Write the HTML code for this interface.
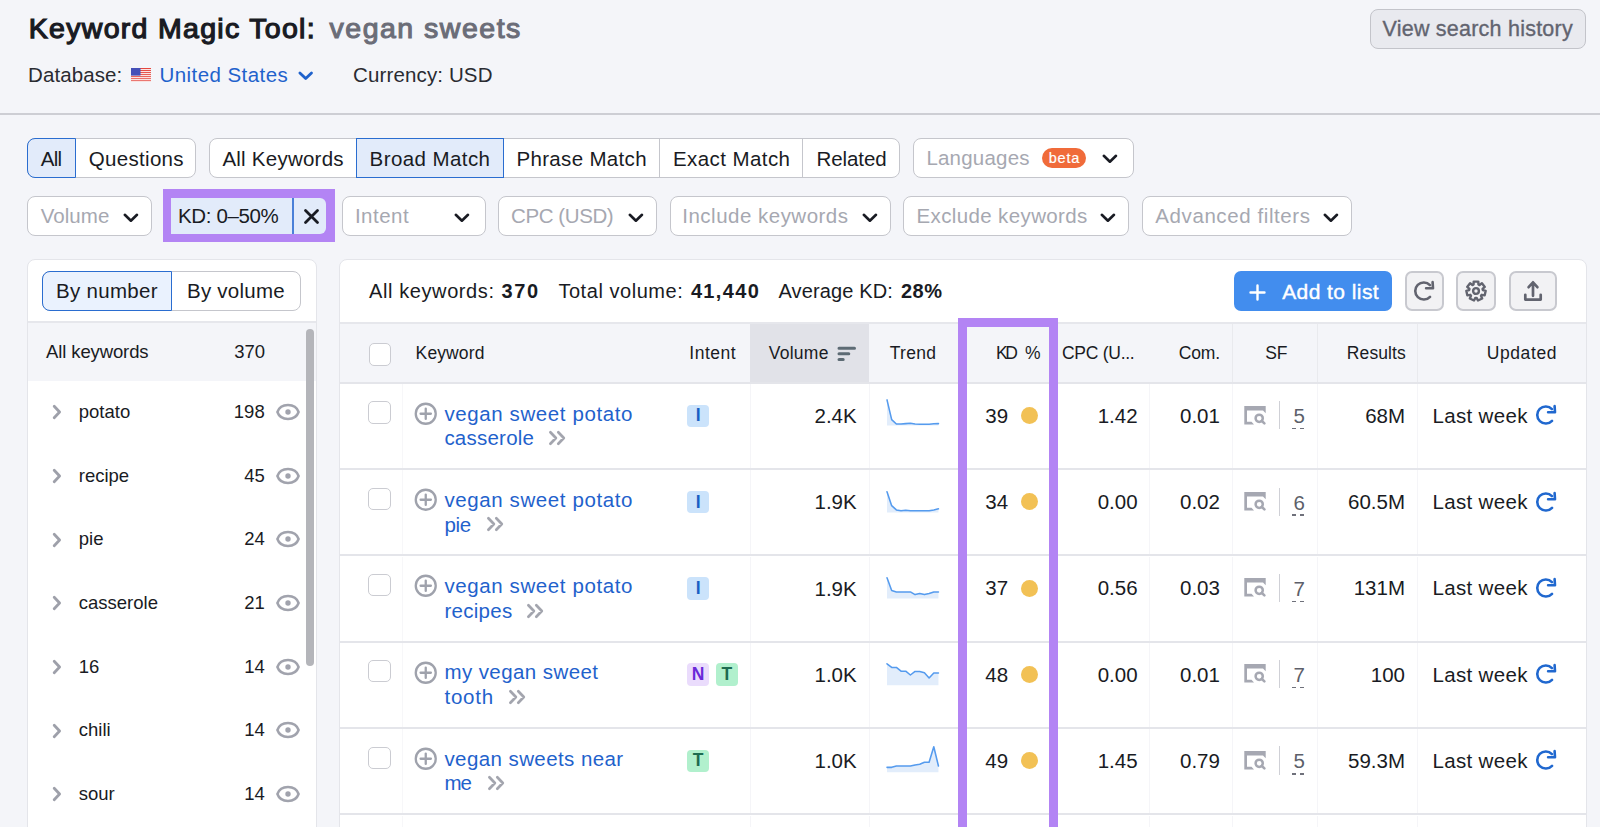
<!DOCTYPE html>
<html><head><meta charset="utf-8"><style>
html,body{margin:0;padding:0}
body{width:1600px;height:827px;overflow:hidden;background:#f4f5f9;position:relative;font-family:"Liberation Sans",sans-serif}
.t{position:absolute;white-space:nowrap;font-family:"Liberation Sans",sans-serif}
.b{position:absolute;display:block}
</style></head><body>
<div class="t" style="left:28.80px;top:10.42px;font-size:28.5px;line-height:37px;letter-spacing:1.298px;color:#191b23;-webkit-text-stroke:1.25px #191b23;">Keyword Magic Tool:</div>
<div class="t" style="left:329.60px;top:10.42px;font-size:28.5px;line-height:37px;letter-spacing:1.493px;color:#6b6d78;-webkit-text-stroke:1.1px #6b6d78;">vegan sweets</div>
<div class="b" style="left:1369.75px;top:9.30px;width:216.25px;height:40.20px;background:#e9eaef;border:1.5px solid #c3c4ca;border-radius:8px;box-sizing:border-box"></div>
<div class="t" style="left:1382.50px;top:14.55px;font-size:21.5px;line-height:28px;letter-spacing:0.232px;color:#62646f;-webkit-text-stroke:0.35px #62646f;">View search history</div>
<div class="t" style="left:28.00px;top:61.40px;font-size:20.5px;line-height:27px;letter-spacing:0.093px;color:#2a2b31;">Database:</div>
<svg class="b" style="left:131.00px;top:67.80px" width="20" height="14.2" viewBox="0 0 20 14.2"><rect x="0" y="0.00" width="20" height="1.01" fill="#e5473f"/><rect x="0" y="2.03" width="20" height="1.01" fill="#e5473f"/><rect x="0" y="4.06" width="20" height="1.01" fill="#e5473f"/><rect x="0" y="6.09" width="20" height="1.01" fill="#e5473f"/><rect x="0" y="8.11" width="20" height="1.01" fill="#e5473f"/><rect x="0" y="10.14" width="20" height="1.01" fill="#e5473f"/><rect x="0" y="12.17" width="20" height="1.01" fill="#e5473f"/><rect x="0" y="1.01" width="20" height="1.01" fill="#fbe4e2"/><rect x="0" y="3.04" width="20" height="1.01" fill="#fbe4e2"/><rect x="0" y="5.07" width="20" height="1.01" fill="#fbe4e2"/><rect x="0" y="7.10" width="20" height="1.01" fill="#fbe4e2"/><rect x="0" y="9.13" width="20" height="1.01" fill="#fbe4e2"/><rect x="0" y="11.16" width="20" height="1.01" fill="#fbe4e2"/><rect x="0" y="13.19" width="20" height="1.01" fill="#fbe4e2"/><rect x="0" y="0" width="9.5" height="7.6" fill="#4550b8"/></svg>
<div class="t" style="left:159.50px;top:61.40px;font-size:20.5px;line-height:27px;letter-spacing:0.437px;color:#1f62cc;">United States</div>
<svg class="b" style="left:297.30px;top:69.50px" width="17.4" height="11.5" viewBox="0 0 17.4 11.5"><path d="M2.90 2.90 L8.70 8.60 L14.50 2.90" fill="none" stroke="#1f62cc" stroke-width="2.8" stroke-linecap="round" stroke-linejoin="round"/></svg>
<div class="t" style="left:353.00px;top:61.40px;font-size:20.5px;line-height:27px;letter-spacing:0.138px;color:#2a2b31;">Currency: USD</div>
<div class="b" style="left:0.00px;top:113.00px;width:1600.00px;height:2.00px;background:#cdced4"></div>
<div class="b" style="left:27.00px;top:138.40px;width:169.30px;height:39.20px;background:#fff;border:1.5px solid #c5c6cc;border-radius:8px;box-sizing:border-box"></div>
<div class="b" style="left:27.00px;top:138.40px;width:48.60px;height:39.20px;background:#e2ebfa;border:1.5px solid #2a6dd0;border-radius:8px 0 0 8px;box-sizing:border-box"></div>
<div class="t" style="left:40.75px;top:145.00px;font-size:20.5px;line-height:27px;letter-spacing:-0.713px;color:#191b23;">All</div>
<div class="t" style="left:88.65px;top:145.00px;font-size:20.5px;line-height:27px;letter-spacing:0.332px;color:#191b23;">Questions</div>
<div class="b" style="left:209.00px;top:138.40px;width:690.50px;height:39.20px;background:#fff;border:1.5px solid #c5c6cc;border-radius:8px;box-sizing:border-box"></div>
<div class="t" style="left:222.40px;top:145.00px;font-size:20.5px;line-height:27px;letter-spacing:0.246px;color:#191b23;">All Keywords</div>
<div class="b" style="left:356.00px;top:138.40px;width:148.00px;height:39.20px;background:#e2ebfa;border:1.5px solid #2a6dd0;border-radius:0;box-sizing:border-box"></div>
<div class="t" style="left:369.60px;top:145.00px;font-size:20.5px;line-height:27px;letter-spacing:0.419px;color:#191b23;">Broad Match</div>
<div class="t" style="left:516.40px;top:145.00px;font-size:20.5px;line-height:27px;letter-spacing:0.340px;color:#191b23;">Phrase Match</div>
<div class="b" style="left:658.85px;top:138.40px;width:1.50px;height:39.20px;background:#c5c6cc"></div>
<div class="t" style="left:673.00px;top:145.00px;font-size:20.5px;line-height:27px;letter-spacing:0.421px;color:#191b23;">Exact Match</div>
<div class="b" style="left:801.85px;top:138.40px;width:1.50px;height:39.20px;background:#c5c6cc"></div>
<div class="t" style="left:816.40px;top:145.00px;font-size:20.5px;line-height:27px;letter-spacing:-0.061px;color:#191b23;">Related</div>
<div class="b" style="left:912.60px;top:138.40px;width:221.00px;height:39.20px;background:#fff;border:1.5px solid #c5c6cc;border-radius:8px;box-sizing:border-box"></div>
<div class="t" style="left:926.40px;top:143.80px;font-size:20.5px;line-height:27px;letter-spacing:0.206px;color:#a6a8b1;">Languages</div>
<div class="b" style="left:1041.60px;top:148.00px;width:44.80px;height:19.80px;background:#f06b3a;border-radius:10px"></div>
<div class="t" style="left:1048.80px;top:148.68px;font-size:14.5px;line-height:19px;letter-spacing:0.756px;color:#fff;-webkit-text-stroke:0.2px #fff;">beta</div>
<svg class="b" style="left:1100.50px;top:152.50px" width="17.8" height="11.5" viewBox="0 0 17.8 11.5"><path d="M2.80 2.80 L8.90 8.70 L15.00 2.80" fill="none" stroke="#191b23" stroke-width="2.6" stroke-linecap="round" stroke-linejoin="round"/></svg>
<div class="b" style="left:27.00px;top:196.00px;width:124.80px;height:39.60px;background:#fff;border:1.5px solid #c5c6cc;border-radius:8px;box-sizing:border-box"></div>
<div class="t" style="left:40.75px;top:202.20px;font-size:20.5px;line-height:27px;letter-spacing:0.036px;color:#a6a8b1;">Volume</div>
<svg class="b" style="left:122.00px;top:212.00px" width="17.8" height="11.5" viewBox="0 0 17.8 11.5"><path d="M2.80 2.80 L8.90 8.70 L15.00 2.80" fill="none" stroke="#191b23" stroke-width="2.6" stroke-linecap="round" stroke-linejoin="round"/></svg>
<div class="b" style="left:342.00px;top:196.00px;width:143.80px;height:39.60px;background:#fff;border:1.5px solid #c5c6cc;border-radius:8px;box-sizing:border-box"></div>
<div class="t" style="left:354.90px;top:202.20px;font-size:20.5px;line-height:27px;letter-spacing:0.482px;color:#a6a8b1;">Intent</div>
<svg class="b" style="left:452.80px;top:212.00px" width="17.8" height="11.5" viewBox="0 0 17.8 11.5"><path d="M2.80 2.80 L8.90 8.70 L15.00 2.80" fill="none" stroke="#191b23" stroke-width="2.6" stroke-linecap="round" stroke-linejoin="round"/></svg>
<div class="b" style="left:498.30px;top:196.00px;width:158.50px;height:39.60px;background:#fff;border:1.5px solid #c5c6cc;border-radius:8px;box-sizing:border-box"></div>
<div class="t" style="left:511.00px;top:202.20px;font-size:20.5px;line-height:27px;letter-spacing:-0.403px;color:#a6a8b1;">CPC (USD)</div>
<svg class="b" style="left:627.10px;top:212.00px" width="17.8" height="11.5" viewBox="0 0 17.8 11.5"><path d="M2.80 2.80 L8.90 8.70 L15.00 2.80" fill="none" stroke="#191b23" stroke-width="2.6" stroke-linecap="round" stroke-linejoin="round"/></svg>
<div class="b" style="left:669.60px;top:196.00px;width:221.00px;height:39.60px;background:#fff;border:1.5px solid #c5c6cc;border-radius:8px;box-sizing:border-box"></div>
<div class="t" style="left:682.30px;top:202.20px;font-size:20.5px;line-height:27px;letter-spacing:0.488px;color:#a6a8b1;">Include keywords</div>
<svg class="b" style="left:860.80px;top:212.00px" width="17.8" height="11.5" viewBox="0 0 17.8 11.5"><path d="M2.80 2.80 L8.90 8.70 L15.00 2.80" fill="none" stroke="#191b23" stroke-width="2.6" stroke-linecap="round" stroke-linejoin="round"/></svg>
<div class="b" style="left:903.30px;top:196.00px;width:226.10px;height:39.60px;background:#fff;border:1.5px solid #c5c6cc;border-radius:8px;box-sizing:border-box"></div>
<div class="t" style="left:916.50px;top:202.20px;font-size:20.5px;line-height:27px;letter-spacing:0.373px;color:#a6a8b1;">Exclude keywords</div>
<svg class="b" style="left:1099.30px;top:212.00px" width="17.8" height="11.5" viewBox="0 0 17.8 11.5"><path d="M2.80 2.80 L8.90 8.70 L15.00 2.80" fill="none" stroke="#191b23" stroke-width="2.6" stroke-linecap="round" stroke-linejoin="round"/></svg>
<div class="b" style="left:1142.20px;top:196.00px;width:210.00px;height:39.60px;background:#fff;border:1.5px solid #c5c6cc;border-radius:8px;box-sizing:border-box"></div>
<div class="t" style="left:1155.30px;top:202.20px;font-size:20.5px;line-height:27px;letter-spacing:0.590px;color:#a6a8b1;">Advanced filters</div>
<svg class="b" style="left:1322.10px;top:212.00px" width="17.8" height="11.5" viewBox="0 0 17.8 11.5"><path d="M2.80 2.80 L8.90 8.70 L15.00 2.80" fill="none" stroke="#191b23" stroke-width="2.6" stroke-linecap="round" stroke-linejoin="round"/></svg>
<div class="b" style="left:162.50px;top:189.00px;width:172.50px;height:53.00px;background:#b384f4"></div>
<div class="b" style="left:171.25px;top:197.50px;width:155.00px;height:36.00px;background:#e2ebfa;border-radius:0 6px 6px 0"></div>
<div class="b" style="left:292.20px;top:197.50px;width:1.60px;height:36.00px;background:#4a80d8"></div>
<div class="t" style="left:178.00px;top:201.90px;font-size:20.5px;line-height:27px;letter-spacing:-0.370px;color:#191b23;">KD: 0–50%</div>
<svg class="b" style="left:302.50px;top:207.80px" width="17" height="17" viewBox="0 0 17 17"><path d="M2.5 2.5 L14.5 14.5 M14.5 2.5 L2.5 14.5" stroke="#191b23" stroke-width="2.8" stroke-linecap="round"/></svg>
<div class="b" style="left:26.50px;top:259.00px;width:290.00px;height:641.00px;background:#fff;border:1px solid #e4e5ea;border-radius:8px;box-sizing:border-box"></div>
<div class="b" style="left:42.40px;top:271.00px;width:258.20px;height:39.60px;background:#fff;border:1.5px solid #c5c6cc;border-radius:8px;box-sizing:border-box"></div>
<div class="b" style="left:42.40px;top:271.00px;width:129.20px;height:39.60px;background:#eaf2fe;border:1.5px solid #2a6dd0;border-radius:8px 0 0 8px;box-sizing:border-box"></div>
<div class="t" style="left:56.00px;top:277.40px;font-size:20.5px;line-height:27px;letter-spacing:0.310px;color:#191b23;">By number</div>
<div class="t" style="left:187.00px;top:277.40px;font-size:20.5px;line-height:27px;letter-spacing:0.238px;color:#191b23;">By volume</div>
<div class="b" style="left:27.50px;top:321.00px;width:288.00px;height:2.00px;background:#e6e7ec"></div>
<div class="b" style="left:27.50px;top:323.00px;width:288.00px;height:58.00px;background:#f4f5f9"></div>
<div class="t" style="left:46.00px;top:339.59px;font-size:18.5px;line-height:24px;letter-spacing:-0.113px;color:#191b23;">All keywords</div>
<div class="t" style="left:234.14px;top:339.59px;font-size:18.5px;line-height:24px;letter-spacing:0.000px;color:#191b23;">370</div>
<div class="b" style="left:306.00px;top:329.00px;width:8.00px;height:337.00px;background:#b4b5ba;border-radius:4px"></div>
<svg class="b" style="left:51.00px;top:403.40px" width="12" height="18" viewBox="0 0 12 18"><path d="M3.2 3.2 L8.6 9 L3.2 14.8" fill="none" stroke="#9ea0aa" stroke-width="2.8" stroke-linecap="round" stroke-linejoin="round"/></svg>
<div class="t" style="left:78.75px;top:399.99px;font-size:18.5px;line-height:24px;letter-spacing:0.000px;color:#191b23;">potato</div>
<div class="t" style="left:233.84px;top:399.99px;font-size:18.5px;line-height:24px;letter-spacing:0.000px;color:#191b23;">198</div>
<svg class="b" style="left:274.50px;top:400.90px" width="26" height="22" viewBox="0 0 26 22"><path d="M2.4 11 C5.6 1.7 20.4 1.7 23.6 11 C20.4 20.3 5.6 20.3 2.4 11 Z" fill="none" stroke="#a1a3ad" stroke-width="2.5" stroke-linejoin="round"/><circle cx="13" cy="11" r="2.7" fill="#a1a3ad"/></svg>
<svg class="b" style="left:51.00px;top:467.07px" width="12" height="18" viewBox="0 0 12 18"><path d="M3.2 3.2 L8.6 9 L3.2 14.8" fill="none" stroke="#9ea0aa" stroke-width="2.8" stroke-linecap="round" stroke-linejoin="round"/></svg>
<div class="t" style="left:78.75px;top:463.66px;font-size:18.5px;line-height:24px;letter-spacing:0.000px;color:#191b23;">recipe</div>
<div class="t" style="left:244.13px;top:463.66px;font-size:18.5px;line-height:24px;letter-spacing:0.000px;color:#191b23;">45</div>
<svg class="b" style="left:274.50px;top:464.57px" width="26" height="22" viewBox="0 0 26 22"><path d="M2.4 11 C5.6 1.7 20.4 1.7 23.6 11 C20.4 20.3 5.6 20.3 2.4 11 Z" fill="none" stroke="#a1a3ad" stroke-width="2.5" stroke-linejoin="round"/><circle cx="13" cy="11" r="2.7" fill="#a1a3ad"/></svg>
<svg class="b" style="left:51.00px;top:530.74px" width="12" height="18" viewBox="0 0 12 18"><path d="M3.2 3.2 L8.6 9 L3.2 14.8" fill="none" stroke="#9ea0aa" stroke-width="2.8" stroke-linecap="round" stroke-linejoin="round"/></svg>
<div class="t" style="left:78.75px;top:527.33px;font-size:18.5px;line-height:24px;letter-spacing:0.000px;color:#191b23;">pie</div>
<div class="t" style="left:244.13px;top:527.33px;font-size:18.5px;line-height:24px;letter-spacing:0.000px;color:#191b23;">24</div>
<svg class="b" style="left:274.50px;top:528.24px" width="26" height="22" viewBox="0 0 26 22"><path d="M2.4 11 C5.6 1.7 20.4 1.7 23.6 11 C20.4 20.3 5.6 20.3 2.4 11 Z" fill="none" stroke="#a1a3ad" stroke-width="2.5" stroke-linejoin="round"/><circle cx="13" cy="11" r="2.7" fill="#a1a3ad"/></svg>
<svg class="b" style="left:51.00px;top:594.41px" width="12" height="18" viewBox="0 0 12 18"><path d="M3.2 3.2 L8.6 9 L3.2 14.8" fill="none" stroke="#9ea0aa" stroke-width="2.8" stroke-linecap="round" stroke-linejoin="round"/></svg>
<div class="t" style="left:78.75px;top:591.00px;font-size:18.5px;line-height:24px;letter-spacing:0.000px;color:#191b23;">casserole</div>
<div class="t" style="left:244.13px;top:591.00px;font-size:18.5px;line-height:24px;letter-spacing:0.000px;color:#191b23;">21</div>
<svg class="b" style="left:274.50px;top:591.91px" width="26" height="22" viewBox="0 0 26 22"><path d="M2.4 11 C5.6 1.7 20.4 1.7 23.6 11 C20.4 20.3 5.6 20.3 2.4 11 Z" fill="none" stroke="#a1a3ad" stroke-width="2.5" stroke-linejoin="round"/><circle cx="13" cy="11" r="2.7" fill="#a1a3ad"/></svg>
<svg class="b" style="left:51.00px;top:658.08px" width="12" height="18" viewBox="0 0 12 18"><path d="M3.2 3.2 L8.6 9 L3.2 14.8" fill="none" stroke="#9ea0aa" stroke-width="2.8" stroke-linecap="round" stroke-linejoin="round"/></svg>
<div class="t" style="left:78.75px;top:654.67px;font-size:18.5px;line-height:24px;letter-spacing:0.000px;color:#191b23;">16</div>
<div class="t" style="left:244.13px;top:654.67px;font-size:18.5px;line-height:24px;letter-spacing:0.000px;color:#191b23;">14</div>
<svg class="b" style="left:274.50px;top:655.58px" width="26" height="22" viewBox="0 0 26 22"><path d="M2.4 11 C5.6 1.7 20.4 1.7 23.6 11 C20.4 20.3 5.6 20.3 2.4 11 Z" fill="none" stroke="#a1a3ad" stroke-width="2.5" stroke-linejoin="round"/><circle cx="13" cy="11" r="2.7" fill="#a1a3ad"/></svg>
<svg class="b" style="left:51.00px;top:721.75px" width="12" height="18" viewBox="0 0 12 18"><path d="M3.2 3.2 L8.6 9 L3.2 14.8" fill="none" stroke="#9ea0aa" stroke-width="2.8" stroke-linecap="round" stroke-linejoin="round"/></svg>
<div class="t" style="left:78.75px;top:718.34px;font-size:18.5px;line-height:24px;letter-spacing:0.000px;color:#191b23;">chili</div>
<div class="t" style="left:244.13px;top:718.34px;font-size:18.5px;line-height:24px;letter-spacing:0.000px;color:#191b23;">14</div>
<svg class="b" style="left:274.50px;top:719.25px" width="26" height="22" viewBox="0 0 26 22"><path d="M2.4 11 C5.6 1.7 20.4 1.7 23.6 11 C20.4 20.3 5.6 20.3 2.4 11 Z" fill="none" stroke="#a1a3ad" stroke-width="2.5" stroke-linejoin="round"/><circle cx="13" cy="11" r="2.7" fill="#a1a3ad"/></svg>
<svg class="b" style="left:51.00px;top:785.42px" width="12" height="18" viewBox="0 0 12 18"><path d="M3.2 3.2 L8.6 9 L3.2 14.8" fill="none" stroke="#9ea0aa" stroke-width="2.8" stroke-linecap="round" stroke-linejoin="round"/></svg>
<div class="t" style="left:78.75px;top:782.01px;font-size:18.5px;line-height:24px;letter-spacing:0.000px;color:#191b23;">sour</div>
<div class="t" style="left:244.13px;top:782.01px;font-size:18.5px;line-height:24px;letter-spacing:0.000px;color:#191b23;">14</div>
<svg class="b" style="left:274.50px;top:782.92px" width="26" height="22" viewBox="0 0 26 22"><path d="M2.4 11 C5.6 1.7 20.4 1.7 23.6 11 C20.4 20.3 5.6 20.3 2.4 11 Z" fill="none" stroke="#a1a3ad" stroke-width="2.5" stroke-linejoin="round"/><circle cx="13" cy="11" r="2.7" fill="#a1a3ad"/></svg>
<div class="b" style="left:339.00px;top:259.00px;width:1247.50px;height:641.00px;background:#fff;border:1px solid #e4e5ea;border-radius:8px;box-sizing:border-box"></div>
<div class="t" style="left:369.00px;top:278.17px;font-size:20px;line-height:26px;letter-spacing:0.598px;color:#191b23;">All keywords:</div>
<div class="t" style="left:501.60px;top:278.17px;font-size:20px;line-height:26px;letter-spacing:1.520px;color:#191b23;font-weight:700;">370</div>
<div class="t" style="left:558.40px;top:278.17px;font-size:20px;line-height:26px;letter-spacing:0.547px;color:#191b23;">Total volume:</div>
<div class="t" style="left:690.90px;top:278.17px;font-size:20px;line-height:26px;letter-spacing:1.344px;color:#191b23;font-weight:700;">41,440</div>
<div class="t" style="left:778.40px;top:278.17px;font-size:20px;line-height:26px;letter-spacing:0.138px;color:#191b23;">Average KD:</div>
<div class="t" style="left:900.90px;top:278.17px;font-size:20px;line-height:26px;letter-spacing:0.540px;color:#191b23;font-weight:700;">28%</div>
<div class="b" style="left:1233.50px;top:271.20px;width:158.70px;height:39.80px;background:#428dee;border-radius:7px"></div>
<svg class="b" style="left:1249.00px;top:283.50px" width="17" height="17" viewBox="0 0 17 17"><path d="M8.5 1.5 V15.5 M1.5 8.5 H15.5" stroke="#fff" stroke-width="2.4" stroke-linecap="round"/></svg>
<div class="t" style="left:1282.20px;top:277.72px;font-size:21px;line-height:27px;letter-spacing:0.429px;color:#fff;-webkit-text-stroke:0.4px #fff;">Add to list</div>
<div class="b" style="left:1404.60px;top:271.20px;width:39.40px;height:39.80px;background:#f2f2f4;border:2px solid #c8c9cf;border-radius:7px;box-sizing:border-box"></div>
<div class="b" style="left:1456.30px;top:271.20px;width:39.90px;height:39.80px;background:#f2f2f4;border:2px solid #c8c9cf;border-radius:7px;box-sizing:border-box"></div>
<div class="b" style="left:1508.60px;top:271.20px;width:48.20px;height:39.80px;background:#f2f2f4;border:2px solid #c8c9cf;border-radius:7px;box-sizing:border-box"></div>
<svg class="b" style="left:1411.60px;top:278.90px" width="24" height="24" viewBox="0 0 24 24"><path d="M18.05 17.83 A8.55 8.55 0 1 1 17.95 6.06" fill="none" stroke="#62646f" stroke-width="2.6" stroke-linecap="round"/><path d="M14.1 9.3 L21 9.3 L20.6 3.1" fill="none" stroke="#62646f" stroke-width="2.6" stroke-linecap="round" stroke-linejoin="round"/></svg>
<svg class="b" style="left:1464.40px;top:279.00px" width="24" height="24" viewBox="0 0 24 24"><path d="M9.69 2.58 L14.31 2.58 L14.43 5.54 L15.53 6.07 L17.93 4.32 L20.80 7.93 L18.56 9.87 L18.84 11.07 L21.70 11.85 L20.67 16.34 L17.75 15.81 L16.99 16.76 L18.17 19.49 L14.01 21.49 L12.61 18.87 L11.39 18.87 L9.99 21.49 L5.83 19.49 L7.01 16.76 L6.25 15.81 L3.33 16.34 L2.30 11.85 L5.16 11.07 L5.44 9.87 L3.20 7.93 L6.07 4.32 L8.47 6.07 L9.57 5.54 Z" fill="none" stroke="#62646f" stroke-width="2.4" stroke-linejoin="round"/><circle cx="12" cy="12" r="2.9" fill="none" stroke="#62646f" stroke-width="2.4"/></svg>
<svg class="b" style="left:1520.60px;top:279.00px" width="24" height="24" viewBox="0 0 24 24"><path d="M12 16.8 V3.6 M7.6 8.2 L12 3.3 L16.4 8.2" fill="none" stroke="#62646f" stroke-width="2.7" stroke-linecap="round" stroke-linejoin="round"/><path d="M4.3 15.8 V20.6 H19.7 V15.8" fill="none" stroke="#62646f" stroke-width="2.7" stroke-linecap="round" stroke-linejoin="round"/></svg>
<div class="b" style="left:340.00px;top:321.50px;width:1245.50px;height:2.00px;background:#e6e7ec"></div>
<div class="b" style="left:340.00px;top:323.50px;width:1245.50px;height:58.50px;background:#f4f5f9"></div>
<div class="b" style="left:750.30px;top:323.50px;width:119.00px;height:58.50px;background:#e1e2e8"></div>
<div class="b" style="left:1232.30px;top:323.50px;width:1.00px;height:58.50px;background:#e9eaee"></div>
<div class="b" style="left:1316.90px;top:323.50px;width:1.00px;height:58.50px;background:#e9eaee"></div>
<div class="b" style="left:1416.80px;top:323.50px;width:1.00px;height:58.50px;background:#e9eaee"></div>
<div class="b" style="left:340.00px;top:382.00px;width:1245.50px;height:2.00px;background:#e4e5ea"></div>
<div class="b" style="left:368.60px;top:343.40px;width:22.40px;height:22.20px;background:#fff;border:1.8px solid #cbccd2;border-radius:5px;box-sizing:border-box"></div>
<div class="t" style="left:415.60px;top:342.14px;font-size:17.5px;line-height:23px;letter-spacing:0.118px;color:#191b23;">Keyword</div>
<div class="t" style="left:689.30px;top:342.14px;font-size:17.5px;line-height:23px;letter-spacing:0.503px;color:#191b23;">Intent</div>
<div class="t" style="left:768.80px;top:342.14px;font-size:17.5px;line-height:23px;letter-spacing:0.248px;color:#191b23;">Volume</div>
<svg class="b" style="left:836.00px;top:344.50px" width="21" height="18" viewBox="0 0 21 18"><path d="M3 3.2 H18.5 M3 8.8 H12.8 M3 14.4 H7.2" stroke="#5d6b74" stroke-width="3" stroke-linecap="round"/></svg>
<div class="t" style="left:889.80px;top:342.14px;font-size:17.5px;line-height:23px;letter-spacing:0.259px;color:#191b23;">Trend</div>
<div class="t" style="left:996.00px;top:342.14px;font-size:17.5px;line-height:23px;letter-spacing:-2.408px;color:#191b23;">KD</div>
<div class="t" style="left:1025.00px;top:342.14px;font-size:17.5px;line-height:23px;letter-spacing:0.000px;color:#191b23;">%</div>
<div class="t" style="left:1062.00px;top:342.14px;font-size:17.5px;line-height:23px;letter-spacing:-0.271px;color:#191b23;">CPC (U...</div>
<div class="t" style="left:1178.80px;top:342.14px;font-size:17.5px;line-height:23px;letter-spacing:-0.202px;color:#191b23;">Com.</div>
<div class="t" style="left:1265.20px;top:342.14px;font-size:17.5px;line-height:23px;letter-spacing:0.000px;color:#191b23;">SF</div>
<div class="t" style="left:1346.80px;top:342.14px;font-size:17.5px;line-height:23px;letter-spacing:0.109px;color:#191b23;">Results</div>
<div class="t" style="left:1486.70px;top:342.14px;font-size:17.5px;line-height:23px;letter-spacing:0.605px;color:#191b23;">Updated</div>
<div class="b" style="left:401.80px;top:384.00px;width:1.00px;height:85.00px;background:#f7f7f9"></div>
<div class="b" style="left:750.20px;top:384.00px;width:1.00px;height:85.00px;background:#f5f5f8"></div>
<div class="b" style="left:868.90px;top:384.00px;width:1.00px;height:85.00px;background:#f5f5f8"></div>
<div class="b" style="left:1149.40px;top:384.00px;width:1.00px;height:85.00px;background:#f5f5f8"></div>
<div class="b" style="left:1231.90px;top:384.00px;width:1.00px;height:85.00px;background:#f5f5f8"></div>
<div class="b" style="left:1317.30px;top:384.00px;width:1.00px;height:85.00px;background:#f5f5f8"></div>
<div class="b" style="left:1416.90px;top:384.00px;width:1.00px;height:85.00px;background:#f5f5f8"></div>
<div class="b" style="left:340.00px;top:468.00px;width:1245.50px;height:2.00px;background:#e4e5ea"></div>
<div class="b" style="left:368.40px;top:401.40px;width:22.60px;height:22.20px;background:#fff;border:1.8px solid #cbccd2;border-radius:5px;box-sizing:border-box"></div>
<svg class="b" style="left:413.80px;top:401.80px" width="23.5" height="23.5" viewBox="0 0 23.5 23.5"><circle cx="11.75" cy="11.75" r="10" fill="none" stroke="#9fa2ac" stroke-width="2.3"/><path d="M11.75 6.6 V16.9 M6.6 11.75 H16.9" stroke="#9fa2ac" stroke-width="2.3" stroke-linecap="round"/></svg>
<div class="t" style="left:444.40px;top:399.50px;font-size:20.5px;line-height:27px;letter-spacing:0.600px;color:#1f62cc;">vegan sweet potato</div>
<div class="t" style="left:444.40px;top:424.20px;font-size:20.5px;line-height:27px;letter-spacing:0.233px;color:#1f62cc;">casserole</div>
<svg class="b" style="left:548.00px;top:430.00px" width="19" height="16" viewBox="0 0 19 16"><path d="M2.4 2.3 L7.9 8 L2.4 13.7 M10.3 2.3 L15.8 8 L10.3 13.7" fill="none" stroke="#a3a5ae" stroke-width="2.7" stroke-linecap="round" stroke-linejoin="round"/></svg>
<div class="b" style="left:686.90px;top:404.50px;width:22.40px;height:22.70px;background:#cbe3fb;border-radius:4px"></div>
<div class="t" style="left:695.67px;top:404.24px;font-size:17.5px;line-height:23px;letter-spacing:0.000px;color:#1a5fc4;font-weight:700;">I</div>
<div class="t" style="left:814.53px;top:402.00px;font-size:20.5px;line-height:27px;letter-spacing:0.000px;color:#191b23;">2.4K</div>
<svg class="b" style="left:886.20px;top:399.47px" width="54" height="30" viewBox="0 0 54 30"><path d="M1.00 0.89 L5.68 20.58 L10.36 25.06 L15.03 25.06 L19.71 24.61 L24.39 24.16 L29.07 25.06 L33.74 25.28 L38.42 25.28 L43.10 25.28 L47.78 24.83 L52.45 24.61 L52.45 26.40 L1 26.40 Z" fill="#e2edfb"/><path d="M1.00 0.89 L5.68 20.58 L10.36 25.06 L15.03 25.06 L19.71 24.61 L24.39 24.16 L29.07 25.06 L33.74 25.28 L38.42 25.28 L43.10 25.28 L47.78 24.83 L52.45 24.61" fill="none" stroke="#559bee" stroke-width="1.55" stroke-linejoin="round" stroke-linecap="round"/></svg>
<div class="t" style="left:985.30px;top:401.80px;font-size:20.5px;line-height:27px;letter-spacing:0.000px;color:#191b23;">39</div>
<div class="b" style="left:1020.90px;top:407.00px;width:17.00px;height:17.00px;background:#f2c155;border-radius:50%"></div>
<div class="t" style="left:1097.71px;top:401.80px;font-size:20.5px;line-height:27px;letter-spacing:0.000px;color:#191b23;">1.42</div>
<div class="t" style="left:1180.01px;top:401.80px;font-size:20.5px;line-height:27px;letter-spacing:0.000px;color:#191b23;">0.01</div>
<svg class="b" style="left:1243.00px;top:404.50px" width="24" height="21" viewBox="0 0 24 21"><path d="M1.3 0.9 H22.7 V8.3 L20 5.4 H4 V16.7 H8.5 L11 19.4 H1.3 Z" fill="#a6a8b2"/><circle cx="16.2" cy="13.3" r="3.6" fill="none" stroke="#a6a8b2" stroke-width="2.5"/><path d="M18.9 16 L21.4 18.4" stroke="#a6a8b2" stroke-width="2.6" stroke-linecap="round"/></svg>
<div class="b" style="left:1279.10px;top:401.20px;width:1.00px;height:28.30px;background:#cfd0d6"></div>
<div class="t" style="left:1293.40px;top:402.20px;font-size:20.5px;line-height:27px;letter-spacing:0.000px;color:#5d5f6a;">5</div>
<div class="b" style="left:1292.00px;top:428.00px;width:3.80px;height:1.40px;background:#6f717b"></div>
<div class="b" style="left:1300.10px;top:428.00px;width:3.80px;height:1.40px;background:#6f717b"></div>
<div class="t" style="left:1365.13px;top:401.80px;font-size:20.5px;line-height:27px;letter-spacing:0.000px;color:#191b23;">68M</div>
<div class="t" style="left:1432.50px;top:401.80px;font-size:20.5px;line-height:27px;letter-spacing:0.334px;color:#191b23;">Last week</div>
<svg class="b" style="left:1534.00px;top:403.20px" width="24" height="24" viewBox="0 0 24 24"><path d="M18.05 17.83 A8.55 8.55 0 1 1 17.95 6.06" fill="none" stroke="#2068cf" stroke-width="2.6" stroke-linecap="round"/><path d="M14.1 9.3 L21 9.3 L20.6 3.1" fill="none" stroke="#2068cf" stroke-width="2.6" stroke-linecap="round" stroke-linejoin="round"/></svg>
<div class="b" style="left:401.80px;top:470.30px;width:1.00px;height:85.00px;background:#f7f7f9"></div>
<div class="b" style="left:750.20px;top:470.30px;width:1.00px;height:85.00px;background:#f5f5f8"></div>
<div class="b" style="left:868.90px;top:470.30px;width:1.00px;height:85.00px;background:#f5f5f8"></div>
<div class="b" style="left:1149.40px;top:470.30px;width:1.00px;height:85.00px;background:#f5f5f8"></div>
<div class="b" style="left:1231.90px;top:470.30px;width:1.00px;height:85.00px;background:#f5f5f8"></div>
<div class="b" style="left:1317.30px;top:470.30px;width:1.00px;height:85.00px;background:#f5f5f8"></div>
<div class="b" style="left:1416.90px;top:470.30px;width:1.00px;height:85.00px;background:#f5f5f8"></div>
<div class="b" style="left:340.00px;top:554.30px;width:1245.50px;height:2.00px;background:#e4e5ea"></div>
<div class="b" style="left:368.40px;top:487.70px;width:22.60px;height:22.20px;background:#fff;border:1.8px solid #cbccd2;border-radius:5px;box-sizing:border-box"></div>
<svg class="b" style="left:413.80px;top:488.10px" width="23.5" height="23.5" viewBox="0 0 23.5 23.5"><circle cx="11.75" cy="11.75" r="10" fill="none" stroke="#9fa2ac" stroke-width="2.3"/><path d="M11.75 6.6 V16.9 M6.6 11.75 H16.9" stroke="#9fa2ac" stroke-width="2.3" stroke-linecap="round"/></svg>
<div class="t" style="left:444.40px;top:485.80px;font-size:20.5px;line-height:27px;letter-spacing:0.600px;color:#1f62cc;">vegan sweet potato</div>
<div class="t" style="left:444.40px;top:510.50px;font-size:20.5px;line-height:27px;letter-spacing:-0.273px;color:#1f62cc;">pie</div>
<svg class="b" style="left:486.00px;top:516.30px" width="19" height="16" viewBox="0 0 19 16"><path d="M2.4 2.3 L7.9 8 L2.4 13.7 M10.3 2.3 L15.8 8 L10.3 13.7" fill="none" stroke="#a3a5ae" stroke-width="2.7" stroke-linecap="round" stroke-linejoin="round"/></svg>
<div class="b" style="left:686.90px;top:490.80px;width:22.40px;height:22.70px;background:#cbe3fb;border-radius:4px"></div>
<div class="t" style="left:695.67px;top:490.54px;font-size:17.5px;line-height:23px;letter-spacing:0.000px;color:#1a5fc4;font-weight:700;">I</div>
<div class="t" style="left:814.53px;top:488.30px;font-size:20.5px;line-height:27px;letter-spacing:0.000px;color:#191b23;">1.9K</div>
<svg class="b" style="left:886.20px;top:485.77px" width="54" height="30" viewBox="0 0 54 30"><path d="M1.00 5.82 L5.68 19.69 L10.36 23.94 L15.03 24.83 L19.71 24.16 L24.39 24.83 L29.07 24.83 L33.74 24.83 L38.42 24.83 L43.10 24.83 L47.78 23.94 L52.45 22.82 L52.45 26.40 L1 26.40 Z" fill="#e2edfb"/><path d="M1.00 5.82 L5.68 19.69 L10.36 23.94 L15.03 24.83 L19.71 24.16 L24.39 24.83 L29.07 24.83 L33.74 24.83 L38.42 24.83 L43.10 24.83 L47.78 23.94 L52.45 22.82" fill="none" stroke="#559bee" stroke-width="1.55" stroke-linejoin="round" stroke-linecap="round"/></svg>
<div class="t" style="left:985.30px;top:488.10px;font-size:20.5px;line-height:27px;letter-spacing:0.000px;color:#191b23;">34</div>
<div class="b" style="left:1020.90px;top:493.30px;width:17.00px;height:17.00px;background:#f2c155;border-radius:50%"></div>
<div class="t" style="left:1097.71px;top:488.10px;font-size:20.5px;line-height:27px;letter-spacing:0.000px;color:#191b23;">0.00</div>
<div class="t" style="left:1180.01px;top:488.10px;font-size:20.5px;line-height:27px;letter-spacing:0.000px;color:#191b23;">0.02</div>
<svg class="b" style="left:1243.00px;top:490.80px" width="24" height="21" viewBox="0 0 24 21"><path d="M1.3 0.9 H22.7 V8.3 L20 5.4 H4 V16.7 H8.5 L11 19.4 H1.3 Z" fill="#a6a8b2"/><circle cx="16.2" cy="13.3" r="3.6" fill="none" stroke="#a6a8b2" stroke-width="2.5"/><path d="M18.9 16 L21.4 18.4" stroke="#a6a8b2" stroke-width="2.6" stroke-linecap="round"/></svg>
<div class="b" style="left:1279.10px;top:487.50px;width:1.00px;height:28.30px;background:#cfd0d6"></div>
<div class="t" style="left:1293.40px;top:488.50px;font-size:20.5px;line-height:27px;letter-spacing:0.000px;color:#5d5f6a;">6</div>
<div class="b" style="left:1292.00px;top:514.30px;width:3.80px;height:1.40px;background:#6f717b"></div>
<div class="b" style="left:1300.10px;top:514.30px;width:3.80px;height:1.40px;background:#6f717b"></div>
<div class="t" style="left:1348.03px;top:488.10px;font-size:20.5px;line-height:27px;letter-spacing:0.000px;color:#191b23;">60.5M</div>
<div class="t" style="left:1432.50px;top:488.10px;font-size:20.5px;line-height:27px;letter-spacing:0.334px;color:#191b23;">Last week</div>
<svg class="b" style="left:1534.00px;top:489.50px" width="24" height="24" viewBox="0 0 24 24"><path d="M18.05 17.83 A8.55 8.55 0 1 1 17.95 6.06" fill="none" stroke="#2068cf" stroke-width="2.6" stroke-linecap="round"/><path d="M14.1 9.3 L21 9.3 L20.6 3.1" fill="none" stroke="#2068cf" stroke-width="2.6" stroke-linecap="round" stroke-linejoin="round"/></svg>
<div class="b" style="left:401.80px;top:556.60px;width:1.00px;height:85.00px;background:#f7f7f9"></div>
<div class="b" style="left:750.20px;top:556.60px;width:1.00px;height:85.00px;background:#f5f5f8"></div>
<div class="b" style="left:868.90px;top:556.60px;width:1.00px;height:85.00px;background:#f5f5f8"></div>
<div class="b" style="left:1149.40px;top:556.60px;width:1.00px;height:85.00px;background:#f5f5f8"></div>
<div class="b" style="left:1231.90px;top:556.60px;width:1.00px;height:85.00px;background:#f5f5f8"></div>
<div class="b" style="left:1317.30px;top:556.60px;width:1.00px;height:85.00px;background:#f5f5f8"></div>
<div class="b" style="left:1416.90px;top:556.60px;width:1.00px;height:85.00px;background:#f5f5f8"></div>
<div class="b" style="left:340.00px;top:640.60px;width:1245.50px;height:2.00px;background:#e4e5ea"></div>
<div class="b" style="left:368.40px;top:574.00px;width:22.60px;height:22.20px;background:#fff;border:1.8px solid #cbccd2;border-radius:5px;box-sizing:border-box"></div>
<svg class="b" style="left:413.80px;top:574.40px" width="23.5" height="23.5" viewBox="0 0 23.5 23.5"><circle cx="11.75" cy="11.75" r="10" fill="none" stroke="#9fa2ac" stroke-width="2.3"/><path d="M11.75 6.6 V16.9 M6.6 11.75 H16.9" stroke="#9fa2ac" stroke-width="2.3" stroke-linecap="round"/></svg>
<div class="t" style="left:444.40px;top:572.10px;font-size:20.5px;line-height:27px;letter-spacing:0.600px;color:#1f62cc;">vegan sweet potato</div>
<div class="t" style="left:444.40px;top:596.80px;font-size:20.5px;line-height:27px;letter-spacing:0.285px;color:#1f62cc;">recipes</div>
<svg class="b" style="left:526.30px;top:602.60px" width="19" height="16" viewBox="0 0 19 16"><path d="M2.4 2.3 L7.9 8 L2.4 13.7 M10.3 2.3 L15.8 8 L10.3 13.7" fill="none" stroke="#a3a5ae" stroke-width="2.7" stroke-linecap="round" stroke-linejoin="round"/></svg>
<div class="b" style="left:686.90px;top:577.10px;width:22.40px;height:22.70px;background:#cbe3fb;border-radius:4px"></div>
<div class="t" style="left:695.67px;top:576.84px;font-size:17.5px;line-height:23px;letter-spacing:0.000px;color:#1a5fc4;font-weight:700;">I</div>
<div class="t" style="left:814.53px;top:574.60px;font-size:20.5px;line-height:27px;letter-spacing:0.000px;color:#191b23;">1.9K</div>
<svg class="b" style="left:886.20px;top:572.07px" width="54" height="30" viewBox="0 0 54 30"><path d="M1.00 5.82 L5.68 18.57 L10.36 19.91 L15.03 19.91 L19.71 19.91 L24.39 19.91 L29.07 22.60 L33.74 21.48 L38.42 22.60 L43.10 21.48 L47.78 19.91 L52.45 19.91 L52.45 26.40 L1 26.40 Z" fill="#e2edfb"/><path d="M1.00 5.82 L5.68 18.57 L10.36 19.91 L15.03 19.91 L19.71 19.91 L24.39 19.91 L29.07 22.60 L33.74 21.48 L38.42 22.60 L43.10 21.48 L47.78 19.91 L52.45 19.91" fill="none" stroke="#559bee" stroke-width="1.55" stroke-linejoin="round" stroke-linecap="round"/></svg>
<div class="t" style="left:985.30px;top:574.40px;font-size:20.5px;line-height:27px;letter-spacing:0.000px;color:#191b23;">37</div>
<div class="b" style="left:1020.90px;top:579.60px;width:17.00px;height:17.00px;background:#f2c155;border-radius:50%"></div>
<div class="t" style="left:1097.71px;top:574.40px;font-size:20.5px;line-height:27px;letter-spacing:0.000px;color:#191b23;">0.56</div>
<div class="t" style="left:1180.01px;top:574.40px;font-size:20.5px;line-height:27px;letter-spacing:0.000px;color:#191b23;">0.03</div>
<svg class="b" style="left:1243.00px;top:577.10px" width="24" height="21" viewBox="0 0 24 21"><path d="M1.3 0.9 H22.7 V8.3 L20 5.4 H4 V16.7 H8.5 L11 19.4 H1.3 Z" fill="#a6a8b2"/><circle cx="16.2" cy="13.3" r="3.6" fill="none" stroke="#a6a8b2" stroke-width="2.5"/><path d="M18.9 16 L21.4 18.4" stroke="#a6a8b2" stroke-width="2.6" stroke-linecap="round"/></svg>
<div class="b" style="left:1279.10px;top:573.80px;width:1.00px;height:28.30px;background:#cfd0d6"></div>
<div class="t" style="left:1293.40px;top:574.80px;font-size:20.5px;line-height:27px;letter-spacing:0.000px;color:#5d5f6a;">7</div>
<div class="b" style="left:1292.00px;top:600.60px;width:3.80px;height:1.40px;background:#6f717b"></div>
<div class="b" style="left:1300.10px;top:600.60px;width:3.80px;height:1.40px;background:#6f717b"></div>
<div class="t" style="left:1353.73px;top:574.40px;font-size:20.5px;line-height:27px;letter-spacing:0.000px;color:#191b23;">131M</div>
<div class="t" style="left:1432.50px;top:574.40px;font-size:20.5px;line-height:27px;letter-spacing:0.334px;color:#191b23;">Last week</div>
<svg class="b" style="left:1534.00px;top:575.80px" width="24" height="24" viewBox="0 0 24 24"><path d="M18.05 17.83 A8.55 8.55 0 1 1 17.95 6.06" fill="none" stroke="#2068cf" stroke-width="2.6" stroke-linecap="round"/><path d="M14.1 9.3 L21 9.3 L20.6 3.1" fill="none" stroke="#2068cf" stroke-width="2.6" stroke-linecap="round" stroke-linejoin="round"/></svg>
<div class="b" style="left:401.80px;top:642.90px;width:1.00px;height:85.00px;background:#f7f7f9"></div>
<div class="b" style="left:750.20px;top:642.90px;width:1.00px;height:85.00px;background:#f5f5f8"></div>
<div class="b" style="left:868.90px;top:642.90px;width:1.00px;height:85.00px;background:#f5f5f8"></div>
<div class="b" style="left:1149.40px;top:642.90px;width:1.00px;height:85.00px;background:#f5f5f8"></div>
<div class="b" style="left:1231.90px;top:642.90px;width:1.00px;height:85.00px;background:#f5f5f8"></div>
<div class="b" style="left:1317.30px;top:642.90px;width:1.00px;height:85.00px;background:#f5f5f8"></div>
<div class="b" style="left:1416.90px;top:642.90px;width:1.00px;height:85.00px;background:#f5f5f8"></div>
<div class="b" style="left:340.00px;top:726.90px;width:1245.50px;height:2.00px;background:#e4e5ea"></div>
<div class="b" style="left:368.40px;top:660.30px;width:22.60px;height:22.20px;background:#fff;border:1.8px solid #cbccd2;border-radius:5px;box-sizing:border-box"></div>
<svg class="b" style="left:413.80px;top:660.70px" width="23.5" height="23.5" viewBox="0 0 23.5 23.5"><circle cx="11.75" cy="11.75" r="10" fill="none" stroke="#9fa2ac" stroke-width="2.3"/><path d="M11.75 6.6 V16.9 M6.6 11.75 H16.9" stroke="#9fa2ac" stroke-width="2.3" stroke-linecap="round"/></svg>
<div class="t" style="left:444.40px;top:658.40px;font-size:20.5px;line-height:27px;letter-spacing:0.421px;color:#1f62cc;">my vegan sweet</div>
<div class="t" style="left:444.40px;top:683.10px;font-size:20.5px;line-height:27px;letter-spacing:0.802px;color:#1f62cc;">tooth</div>
<svg class="b" style="left:507.60px;top:688.90px" width="19" height="16" viewBox="0 0 19 16"><path d="M2.4 2.3 L7.9 8 L2.4 13.7 M10.3 2.3 L15.8 8 L10.3 13.7" fill="none" stroke="#a3a5ae" stroke-width="2.7" stroke-linecap="round" stroke-linejoin="round"/></svg>
<div class="b" style="left:686.90px;top:663.40px;width:22.40px;height:22.70px;background:#eadcfc;border-radius:4px"></div>
<div class="t" style="left:691.78px;top:663.14px;font-size:17.5px;line-height:23px;letter-spacing:0.000px;color:#6a2ad8;font-weight:700;">N</div>
<div class="b" style="left:715.60px;top:663.40px;width:22.40px;height:22.70px;background:#b1f0cd;border-radius:4px"></div>
<div class="t" style="left:721.45px;top:663.14px;font-size:17.5px;line-height:23px;letter-spacing:0.000px;color:#1d6b50;font-weight:700;">T</div>
<div class="t" style="left:814.53px;top:660.90px;font-size:20.5px;line-height:27px;letter-spacing:0.000px;color:#191b23;">1.0K</div>
<svg class="b" style="left:886.20px;top:658.37px" width="54" height="30" viewBox="0 0 54 30"><path d="M1.00 5.82 L5.68 9.40 L10.36 9.40 L15.03 13.20 L19.71 13.20 L24.39 17.00 L29.07 13.42 L33.74 13.42 L38.42 14.77 L43.10 19.91 L47.78 14.99 L52.45 14.99 L52.45 27.29 L1 27.29 Z" fill="#e2edfb"/><path d="M1.00 5.82 L5.68 9.40 L10.36 9.40 L15.03 13.20 L19.71 13.20 L24.39 17.00 L29.07 13.42 L33.74 13.42 L38.42 14.77 L43.10 19.91 L47.78 14.99 L52.45 14.99" fill="none" stroke="#559bee" stroke-width="1.55" stroke-linejoin="round" stroke-linecap="round"/></svg>
<div class="t" style="left:985.30px;top:660.70px;font-size:20.5px;line-height:27px;letter-spacing:0.000px;color:#191b23;">48</div>
<div class="b" style="left:1020.90px;top:665.90px;width:17.00px;height:17.00px;background:#f2c155;border-radius:50%"></div>
<div class="t" style="left:1097.71px;top:660.70px;font-size:20.5px;line-height:27px;letter-spacing:0.000px;color:#191b23;">0.00</div>
<div class="t" style="left:1180.01px;top:660.70px;font-size:20.5px;line-height:27px;letter-spacing:0.000px;color:#191b23;">0.01</div>
<svg class="b" style="left:1243.00px;top:663.40px" width="24" height="21" viewBox="0 0 24 21"><path d="M1.3 0.9 H22.7 V8.3 L20 5.4 H4 V16.7 H8.5 L11 19.4 H1.3 Z" fill="#a6a8b2"/><circle cx="16.2" cy="13.3" r="3.6" fill="none" stroke="#a6a8b2" stroke-width="2.5"/><path d="M18.9 16 L21.4 18.4" stroke="#a6a8b2" stroke-width="2.6" stroke-linecap="round"/></svg>
<div class="b" style="left:1279.10px;top:660.10px;width:1.00px;height:28.30px;background:#cfd0d6"></div>
<div class="t" style="left:1293.40px;top:661.10px;font-size:20.5px;line-height:27px;letter-spacing:0.000px;color:#5d5f6a;">7</div>
<div class="b" style="left:1292.00px;top:686.90px;width:3.80px;height:1.40px;background:#6f717b"></div>
<div class="b" style="left:1300.10px;top:686.90px;width:3.80px;height:1.40px;background:#6f717b"></div>
<div class="t" style="left:1370.81px;top:660.70px;font-size:20.5px;line-height:27px;letter-spacing:0.000px;color:#191b23;">100</div>
<div class="t" style="left:1432.50px;top:660.70px;font-size:20.5px;line-height:27px;letter-spacing:0.334px;color:#191b23;">Last week</div>
<svg class="b" style="left:1534.00px;top:662.10px" width="24" height="24" viewBox="0 0 24 24"><path d="M18.05 17.83 A8.55 8.55 0 1 1 17.95 6.06" fill="none" stroke="#2068cf" stroke-width="2.6" stroke-linecap="round"/><path d="M14.1 9.3 L21 9.3 L20.6 3.1" fill="none" stroke="#2068cf" stroke-width="2.6" stroke-linecap="round" stroke-linejoin="round"/></svg>
<div class="b" style="left:401.80px;top:729.20px;width:1.00px;height:85.00px;background:#f7f7f9"></div>
<div class="b" style="left:750.20px;top:729.20px;width:1.00px;height:85.00px;background:#f5f5f8"></div>
<div class="b" style="left:868.90px;top:729.20px;width:1.00px;height:85.00px;background:#f5f5f8"></div>
<div class="b" style="left:1149.40px;top:729.20px;width:1.00px;height:85.00px;background:#f5f5f8"></div>
<div class="b" style="left:1231.90px;top:729.20px;width:1.00px;height:85.00px;background:#f5f5f8"></div>
<div class="b" style="left:1317.30px;top:729.20px;width:1.00px;height:85.00px;background:#f5f5f8"></div>
<div class="b" style="left:1416.90px;top:729.20px;width:1.00px;height:85.00px;background:#f5f5f8"></div>
<div class="b" style="left:340.00px;top:813.20px;width:1245.50px;height:2.00px;background:#e4e5ea"></div>
<div class="b" style="left:368.40px;top:746.60px;width:22.60px;height:22.20px;background:#fff;border:1.8px solid #cbccd2;border-radius:5px;box-sizing:border-box"></div>
<svg class="b" style="left:413.80px;top:747.00px" width="23.5" height="23.5" viewBox="0 0 23.5 23.5"><circle cx="11.75" cy="11.75" r="10" fill="none" stroke="#9fa2ac" stroke-width="2.3"/><path d="M11.75 6.6 V16.9 M6.6 11.75 H16.9" stroke="#9fa2ac" stroke-width="2.3" stroke-linecap="round"/></svg>
<div class="t" style="left:444.40px;top:744.70px;font-size:20.5px;line-height:27px;letter-spacing:0.420px;color:#1f62cc;">vegan sweets near</div>
<div class="t" style="left:444.40px;top:769.40px;font-size:20.5px;line-height:27px;letter-spacing:-0.974px;color:#1f62cc;">me</div>
<svg class="b" style="left:486.70px;top:775.20px" width="19" height="16" viewBox="0 0 19 16"><path d="M2.4 2.3 L7.9 8 L2.4 13.7 M10.3 2.3 L15.8 8 L10.3 13.7" fill="none" stroke="#a3a5ae" stroke-width="2.7" stroke-linecap="round" stroke-linejoin="round"/></svg>
<div class="b" style="left:686.90px;top:749.70px;width:22.40px;height:22.70px;background:#b1f0cd;border-radius:4px"></div>
<div class="t" style="left:692.75px;top:749.44px;font-size:17.5px;line-height:23px;letter-spacing:0.000px;color:#1d6b50;font-weight:700;">T</div>
<div class="t" style="left:814.53px;top:747.20px;font-size:20.5px;line-height:27px;letter-spacing:0.000px;color:#191b23;">1.0K</div>
<svg class="b" style="left:886.20px;top:744.67px" width="54" height="30" viewBox="0 0 54 30"><path d="M1.00 22.37 L5.68 22.37 L10.36 21.03 L15.03 21.03 L19.71 21.03 L24.39 21.03 L29.07 19.91 L33.74 19.24 L38.42 17.23 L43.10 17.23 L47.78 1.79 L52.45 21.03 L52.45 27.29 L1 27.29 Z" fill="#e2edfb"/><path d="M1.00 22.37 L5.68 22.37 L10.36 21.03 L15.03 21.03 L19.71 21.03 L24.39 21.03 L29.07 19.91 L33.74 19.24 L38.42 17.23 L43.10 17.23 L47.78 1.79 L52.45 21.03" fill="none" stroke="#559bee" stroke-width="1.55" stroke-linejoin="round" stroke-linecap="round"/></svg>
<div class="t" style="left:985.30px;top:747.00px;font-size:20.5px;line-height:27px;letter-spacing:0.000px;color:#191b23;">49</div>
<div class="b" style="left:1020.90px;top:752.20px;width:17.00px;height:17.00px;background:#f2c155;border-radius:50%"></div>
<div class="t" style="left:1097.71px;top:747.00px;font-size:20.5px;line-height:27px;letter-spacing:0.000px;color:#191b23;">1.45</div>
<div class="t" style="left:1180.01px;top:747.00px;font-size:20.5px;line-height:27px;letter-spacing:0.000px;color:#191b23;">0.79</div>
<svg class="b" style="left:1243.00px;top:749.70px" width="24" height="21" viewBox="0 0 24 21"><path d="M1.3 0.9 H22.7 V8.3 L20 5.4 H4 V16.7 H8.5 L11 19.4 H1.3 Z" fill="#a6a8b2"/><circle cx="16.2" cy="13.3" r="3.6" fill="none" stroke="#a6a8b2" stroke-width="2.5"/><path d="M18.9 16 L21.4 18.4" stroke="#a6a8b2" stroke-width="2.6" stroke-linecap="round"/></svg>
<div class="b" style="left:1279.10px;top:746.40px;width:1.00px;height:28.30px;background:#cfd0d6"></div>
<div class="t" style="left:1293.40px;top:747.40px;font-size:20.5px;line-height:27px;letter-spacing:0.000px;color:#5d5f6a;">5</div>
<div class="b" style="left:1292.00px;top:773.20px;width:3.80px;height:1.40px;background:#6f717b"></div>
<div class="b" style="left:1300.10px;top:773.20px;width:3.80px;height:1.40px;background:#6f717b"></div>
<div class="t" style="left:1348.03px;top:747.00px;font-size:20.5px;line-height:27px;letter-spacing:0.000px;color:#191b23;">59.3M</div>
<div class="t" style="left:1432.50px;top:747.00px;font-size:20.5px;line-height:27px;letter-spacing:0.334px;color:#191b23;">Last week</div>
<svg class="b" style="left:1534.00px;top:748.40px" width="24" height="24" viewBox="0 0 24 24"><path d="M18.05 17.83 A8.55 8.55 0 1 1 17.95 6.06" fill="none" stroke="#2068cf" stroke-width="2.6" stroke-linecap="round"/><path d="M14.1 9.3 L21 9.3 L20.6 3.1" fill="none" stroke="#2068cf" stroke-width="2.6" stroke-linecap="round" stroke-linejoin="round"/></svg>
<div class="b" style="left:401.80px;top:815.50px;width:1.00px;height:11.50px;background:#f7f7f9"></div>
<div class="b" style="left:750.20px;top:815.50px;width:1.00px;height:11.50px;background:#f5f5f8"></div>
<div class="b" style="left:868.90px;top:815.50px;width:1.00px;height:11.50px;background:#f5f5f8"></div>
<div class="b" style="left:1149.40px;top:815.50px;width:1.00px;height:11.50px;background:#f5f5f8"></div>
<div class="b" style="left:1231.90px;top:815.50px;width:1.00px;height:11.50px;background:#f5f5f8"></div>
<div class="b" style="left:1317.30px;top:815.50px;width:1.00px;height:11.50px;background:#f5f5f8"></div>
<div class="b" style="left:1416.90px;top:815.50px;width:1.00px;height:11.50px;background:#f5f5f8"></div>
<div class="b" style="left:958.40px;top:318.00px;width:100.00px;height:582.00px;border:9px solid #b384f4;border-bottom:none;box-sizing:border-box"></div>
</body></html>
